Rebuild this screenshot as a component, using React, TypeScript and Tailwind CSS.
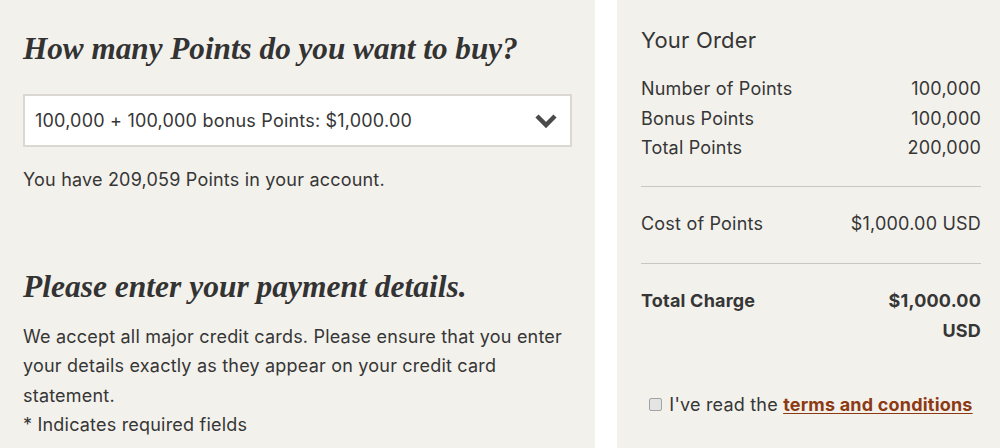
import React from 'react';

const sans = "font-['Inter','Liberation_Sans',sans-serif]";
const serif = "font-['Liberation_Serif',serif]";

const OrderRow: React.FC<{ label: string; value: string }> = ({ label, value }) => (
  <div className="flex justify-between">
    <span>{label}</span>
    <span>{value}</span>
  </div>
);

const App: React.FC = () => {
  return (
    <div className={`flex h-[448px] w-[1000px] overflow-hidden bg-white text-[#363636] tracking-[0.2px] ${sans}`}>
      {/* ─── Left: purchase form ─────────────────────── */}
      <div className="w-[595px] shrink-0 bg-[#f3f1ec] px-[23px] pt-[29px]">
        <h1 className={`${serif} text-[31.2px] font-bold italic leading-[40px] tracking-normal text-[#333]`}>
          How many Points do you want to buy?
        </h1>

        <div className="mt-[25px] flex h-[53px] items-center justify-between border-2 border-[#dcd8d1] bg-white pl-[10px] pr-[12px]">
          <span className="text-[18px]">100,000 + 100,000 bonus Points: $1,000.00</span>
          <svg width="24" height="16" viewBox="0 0 24 16" className="text-[#4a4a4a]">
            <polyline points="3,3 12,12 21,3" fill="none" stroke="currentColor" strokeWidth="4.5" />
          </svg>
        </div>

        <p className="mt-[18px] text-[18px] leading-[29.5px]">You have 209,059 Points in your account.</p>

        <h2 className={`${serif} mt-[72px] text-[31.5px] font-bold italic leading-[40px] tracking-normal text-[#333]`}>
          Please enter your payment details.
        </h2>

        <div className="mt-[15px] text-[18px] leading-[29.5px]">
          <p>
            We accept all major credit cards. Please ensure that you enter your details exactly as they appear on
            your credit card statement.
          </p>
          <p>* Indicates required fields</p>
        </div>
      </div>

      {/* ─── Right: order summary ────────────────────── */}
      <div className="ml-[22px] flex-1 bg-[#f3f1ec] pl-[24px] pr-[19px] pt-[25px] text-[18px] leading-[29.5px]">
        <h3 className="text-[22px] leading-[30px]">Your Order</h3>

        <div className="mt-[19px]">
          <OrderRow label="Number of Points" value="100,000" />
          <OrderRow label="Bonus Points" value="100,000" />
          <OrderRow label="Total Points" value="200,000" />
        </div>

        <div className="mt-[23px] border-t border-[#c9c7c2]" />

        <div className="mt-[22px]">
          <OrderRow label="Cost of Points" value="$1,000.00 USD" />
        </div>

        <div className="mt-[25px] border-t border-[#c9c7c2]" />

        <div className="mt-[22px] flex justify-between font-bold">
          <span>Total Charge</span>
          <span className="text-right">
            $1,000.00
            <br />
            USD
          </span>
        </div>

        <div className="mt-[45px] flex items-center justify-center gap-[7px]">
          <span className="h-[13px] w-[13px] rounded-[2px] border border-[#a3a3a3] bg-[#e4e4e4]" />
          <span>
            I've read the{' '}
            <a href="#" className="font-bold text-[#8c3a14] underline underline-offset-2">
              terms and conditions
            </a>
          </span>
        </div>
      </div>
    </div>
  );
};

export default App;
